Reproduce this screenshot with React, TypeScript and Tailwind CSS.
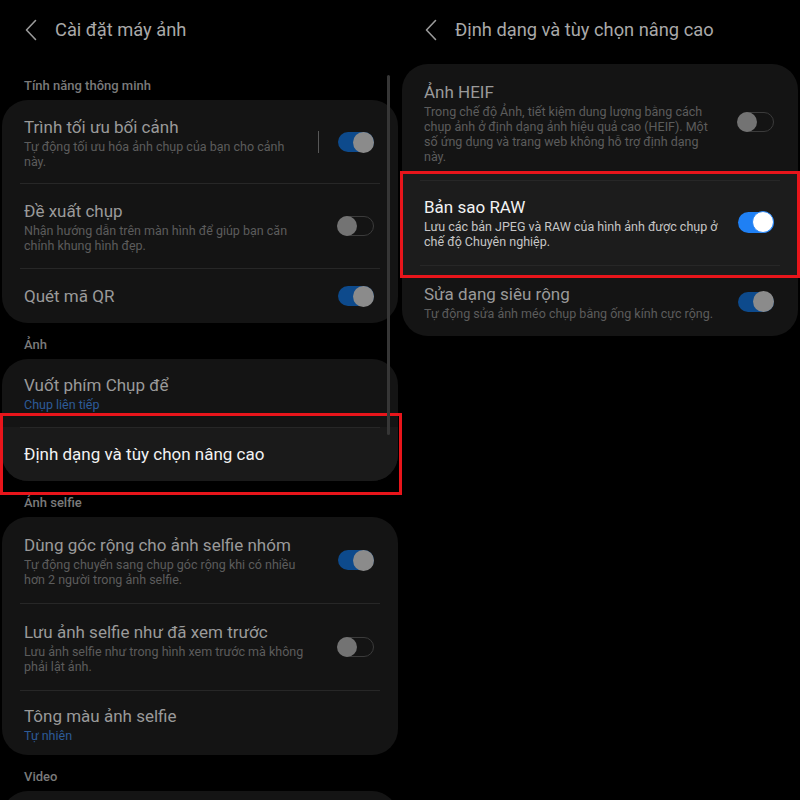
import React from 'react';

type ToggleState = 'on' | 'off' | 'bright';

type Item = {
  title: string;
  sub?: string[];
  link?: string;
  toggle?: ToggleState;
  bar?: boolean;
  pad?: string;
};

const Chevron = () => (
  <svg width="12" height="22" viewBox="0 0 12 22" fill="none" className="shrink-0">
    <path d="M10.5 1.5 L1.5 11 L10.5 20.5" stroke="#9a9a9a" strokeWidth="1.6" strokeLinecap="round" strokeLinejoin="round" />
  </svg>
);

const Header = ({ title }: { title: string }) => (
  <div className="flex h-16 items-center gap-[18px] pb-[4px] pl-[23px]">
    <Chevron />
    <span className="text-[18.3px] text-[#a9a9a9]">{title}</span>
  </div>
);

const Label = ({ children }: { children: React.ReactNode }) => (
  <div className="px-[22px] pb-[6px] pt-[14px] text-[13px] font-medium leading-4 text-[#7a7a7a]">{children}</div>
);

const Toggle = ({ state }: { state: ToggleState }) => {
  if (state === 'off') {
    return (
      <div className="flex h-[20px] w-[36px] shrink-0 items-center rounded-full border-[1.5px] border-[#3b3b3b]">
        <div className="-ml-[2px] h-[20px] w-[20px] rounded-full bg-[#737373]" />
      </div>
    );
  }
  if (state === 'bright') {
    return (
      <div className="flex h-[21px] w-[36px] shrink-0 items-center justify-end rounded-full bg-[#1f80f4]">
        <div className="h-[22px] w-[22px] rounded-full border-[1.5px] border-[#2a86f5] bg-white" />
      </div>
    );
  }
  return (
    <div className="flex h-[20px] w-[36px] shrink-0 items-center justify-end rounded-full bg-[#0d4a8c]">
      <div className="h-[21px] w-[21px] rounded-full bg-[#8b8b8b]" />
    </div>
  );
};

const Divider = () => <div className="mx-[18px] h-px bg-[#272727]" />;

const Row = ({ item, bright = false }: { item: Item; bright?: boolean }) => (
  <div className={`flex items-center pl-[22px] pr-[24px] ${item.pad ?? 'pb-[15px] pt-[15px]'}`}>
    <div className="flex-1">
      <div className={`text-[17px] leading-6 ${bright ? 'text-[#f2f2f2]' : 'text-[#9a9a9a]'}`}>{item.title}</div>
      {item.sub?.map((line) => (
        <div key={line} className={`text-[12.5px] leading-[15px] ${bright ? 'text-[#c6c6c6]' : 'text-[#5c5c5c]'}`}>
          {line}
        </div>
      ))}
      {item.link && <div className="text-[12.5px] leading-4 text-[#2d5b98]">{item.link}</div>}
    </div>
    {item.bar && <div className="mr-[19px] h-[22px] w-[1.5px] bg-[#575757]" />}
    {item.toggle && <Toggle state={item.toggle} />}
  </div>
);

const Card = ({ items }: { items: Item[] }) => (
  <div className="rounded-[26px] bg-[#141414]">
    {items.map((item, i) => (
      <div key={item.title}>
        {i > 0 && <Divider />}
        <Row item={item} />
      </div>
    ))}
  </div>
);

const smart: Item[] = [
  { title: 'Trình tối ưu bối cảnh', sub: ['Tự động tối ưu hóa ảnh chụp của bạn cho cảnh', 'này.'], toggle: 'on', bar: true, pad: 'pb-[14px] pt-[15px]' },
  { title: 'Đề xuất chụp', sub: ['Nhận hướng dẫn trên màn hình để giúp bạn căn', 'chỉnh khung hình đẹp.'], toggle: 'off' },
  { title: 'Quét mã QR', toggle: 'on' },
];

const selfie: Item[] = [
  { title: 'Dùng góc rộng cho ảnh selfie nhóm', sub: ['Tự động chuyển sang chụp góc rộng khi có nhiều', 'hơn 2 người trong ảnh selfie.'], toggle: 'on', pad: 'pb-[16px] pt-[16px]' },
  { title: 'Lưu ảnh selfie như đã xem trước', sub: ['Lưu ảnh selfie như trong hình xem trước mà không', 'phải lật ảnh.'], toggle: 'off', pad: 'pb-[16px] pt-[16px]' },
  { title: 'Tông màu ảnh selfie', link: 'Tự nhiên', pad: 'pb-[11px] pt-[13px]' },
];

export default function App() {
  return (
    <div className="flex h-[800px] w-[800px] overflow-hidden bg-black font-['Roboto',sans-serif]">
      {/* Cài đặt máy ảnh */}
      <div className="relative w-[400px] px-[2px]">
        <Header title="Cài đặt máy ảnh" />
        <Label>Tính năng thông minh</Label>
        <Card items={smart} />

        <Label>Ảnh</Label>
        <div className="rounded-[26px] bg-[#141414]">
          <Row item={{ title: 'Vuốt phím Chụp để', link: 'Chụp liên tiếp', pad: 'pb-[14px] pt-[14px]' }} />
          <div className="relative rounded-b-[26px] bg-[#1a1a1a]">
            <Divider />
            <Row item={{ title: 'Định dạng và tùy chọn nâng cao', pad: 'pb-[15px] pt-[14px]' }} bright />
            <div className="absolute -bottom-[14px] -left-[2px] -right-[4px] -top-[14px] border-[3px] border-[#e8151b]" />
          </div>
        </div>

        <Label>Ảnh selfie</Label>
        <Card items={selfie} />

        <Label>Video</Label>
        <div className="h-[40px] rounded-t-[26px] bg-[#141414]" />

        <div className="absolute left-[387px] top-[75px] h-[360px] w-[3px] rounded-full bg-[#363636]" />
      </div>

      {/* Định dạng và tùy chọn nâng cao */}
      <div className="w-[400px] px-[2px]">
        <Header title="Định dạng và tùy chọn nâng cao" />
        <div className="rounded-[26px] bg-[#141414]">
          <Row
            item={{
              title: 'Ảnh HEIF',
              sub: [
                'Trong chế độ Ảnh, tiết kiệm dung lượng bằng cách',
                'chụp ảnh ở định dạng ảnh hiệu quả cao (HEIF). Một',
                'số ứng dụng và trang web không hỗ trợ định dạng',
                'này.',
              ],
              toggle: 'off',
              pad: 'pb-[7px] pt-[16px]',
            }}
          />
          <div className="relative bg-[#1c1c1c] pb-[12px] pt-[9px]">
            <Divider />
            <Row
              item={{
                title: 'Bản sao RAW',
                sub: ['Lưu các bản JPEG và RAW của hình ảnh được chụp ở', 'chế độ Chuyên nghiệp.'],
                toggle: 'bright',
                pad: 'pb-[16px] pt-[14px]',
              }}
              bright
            />
            <Divider />
            <div className="absolute -left-[2px] -right-[2px] bottom-0 top-0 border-[3px] border-[#e8151b]" />
          </div>
          <Row
            item={{
              title: 'Sửa dạng siêu rộng',
              sub: ['Tự động sửa ảnh méo chụp bằng ống kính cực rộng.'],
              toggle: 'on',
              pad: 'pb-[15px] pt-[4px]',
            }}
          />
        </div>
      </div>
    </div>
  );
}
